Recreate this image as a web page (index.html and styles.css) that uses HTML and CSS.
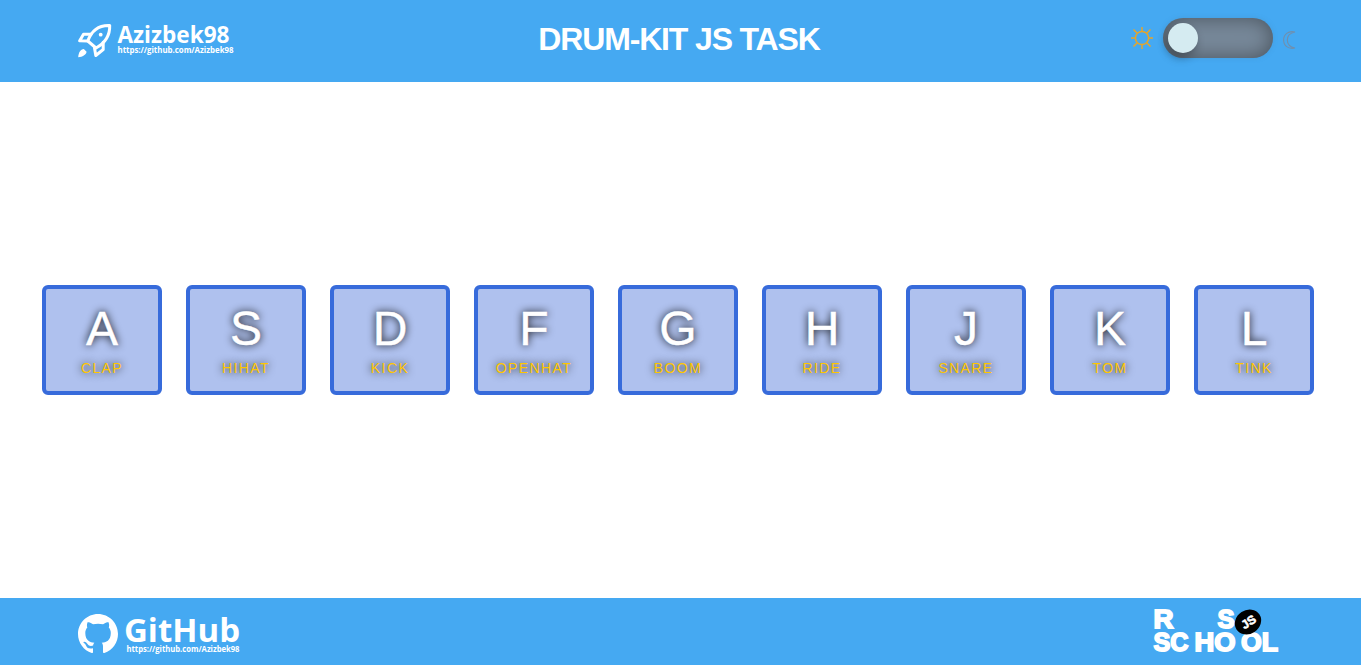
FILE: index.html
```html
<!DOCTYPE html>
<html lang="en">
<head>
<meta charset="utf-8">
<title>Drum-kit JS task</title>
<link rel="stylesheet" href="styles.css">
</head>
<body>
<header class="header">
  <a class="brand"><svg width="170" height="44" viewBox="0 0 170 44">
    <g fill="none" stroke="#fff" stroke-width="3" stroke-linejoin="round" stroke-linecap="round">
      <path d="M9.800 23C13 14 20 7 31.700 7.500C32 17 27 25 18 30Z"/>
      <path d="M13 16.300H5.500L1.700 22.800L9.800 23"/>
      <path d="M25.200 24.300V31.500L17.800 37.500L16.500 30"/>
    </g>
    <path fill="#fff" d="M.2 39.200C.5 34.500 2.500 31.300 5.800 31L8.600 33.800C8 37 4.500 39 .2 39.200Z"/>
    <circle cx="22.700" cy="16.700" r="1.900" fill="#fff"/>
    <text class="logo-text" x="39.500" y="25" font-size="23" textLength="112" lengthAdjust="spacingAndGlyphs">Azizbek98</text>
    <text class="logo-text" x="39.500" y="35" font-size="8" textLength="116" lengthAdjust="spacingAndGlyphs">https://github.com/Azizbek98</text>
  </svg></a>
  <h1 class="title">DRUM-KIT JS TASK</h1>
  <div class="theme">
    <svg class="sun" width="22" height="22" viewBox="0 0 22 22" fill="none" stroke="#e5a52b" stroke-width="1.500">
      <circle cx="11" cy="11" r="6.600"/>
      <path d="M11 0V4M11 18V22M0 11H4M18 11H22M2.500 2.500L6 6M16 16L19.500 19.500M2.500 19.500L6 16M16 6L19.500 2.500"/>
    </svg>
    <button class="switch"><span class="knob"></span></button>
    <svg class="moon" width="13" height="18" viewBox="0 0 13 18" fill="none" stroke="#708fad" stroke-width="1.100">
      <path d="M12 1C5-.5.6 3.500.6 9S5 18.500 12 17C7 16 4.300 13 4.300 9S7 2 12 1Z"/>
    </svg>
  </div>
</header>
<main class="keys">
  <div class="key"><kbd class="letter">A</kbd><span class="sound">CLAP</span></div>
  <div class="key"><kbd class="letter">S</kbd><span class="sound">HIHAT</span></div>
  <div class="key"><kbd class="letter">D</kbd><span class="sound">KICK</span></div>
  <div class="key"><kbd class="letter">F</kbd><span class="sound">OPENHAT</span></div>
  <div class="key"><kbd class="letter">G</kbd><span class="sound">BOOM</span></div>
  <div class="key"><kbd class="letter">H</kbd><span class="sound">RIDE</span></div>
  <div class="key"><kbd class="letter">J</kbd><span class="sound">SNARE</span></div>
  <div class="key"><kbd class="letter">K</kbd><span class="sound">TOM</span></div>
  <div class="key"><kbd class="letter">L</kbd><span class="sound">TINK</span></div>
</main>
<footer class="footer">
  <a class="brand"><svg width="170" height="48" viewBox="0 0 170 48">
    <path fill="#fff" transform="translate(0 6) scale(2.500)" d="M8 0C3.580 0 0 3.580 0 8c0 3.540 2.290 6.530 5.470 7.590.4.070.55-.17.55-.38 0-.19-.01-.82-.01-1.490-2.010.37-2.530-.49-2.690-.94-.09-.23-.48-.94-.82-1.130-.28-.15-.68-.52-.01-.53.63-.01 1.080.58 1.230.82.72 1.210 1.870.87 2.330.66.070-.52.280-.87.510-1.070-1.780-.2-3.640-.89-3.640-3.950 0-.87.310-1.590.82-2.150-.08-.2-.36-1.020.08-2.120 0 0 .67-.21 2.200.82.640-.18 1.320-.27 2-.27s1.360.09 2 .27c1.530-1.040 2.200-.82 2.200-.82.440 1.100.160 1.920.080 2.120.510.560.820 1.270.820 2.150 0 3.070-1.870 3.750-3.650 3.950.290.250.540.730.540 1.480 0 1.070-.01 1.930-.01 2.200 0 .21.150.46.550.38A8.010 8.010 0 0 0 16 8c0-4.420-3.580-8-8-8Z"/>
    <text class="logo-text" x="46" y="34" font-size="32" textLength="116" lengthAdjust="spacingAndGlyphs">GitHub</text>
    <text class="logo-text" x="48.500" y="44" font-size="8" textLength="113" lengthAdjust="spacingAndGlyphs">https://github.com/Azizbek98</text>
  </svg></a>
  <a class="school"><svg class="school-logo" width="126" height="48" viewBox="0 0 126 48">
    <g class="school-text" font-size="26">
      <text x="0.500" y="20" textLength="20" lengthAdjust="spacingAndGlyphs">R</text>
      <text x="64.500" y="20" textLength="17" lengthAdjust="spacingAndGlyphs">S</text>
      <text x="0.500" y="43" textLength="35" lengthAdjust="spacingAndGlyphs">SC</text>
      <text x="41.500" y="43" textLength="41" lengthAdjust="spacingAndGlyphs">HO</text>
      <text x="88" y="43" textLength="37" lengthAdjust="spacingAndGlyphs">OL</text>
    </g>
    <ellipse cx="95" cy="14" rx="13.700" ry="11.800" transform="rotate(-33 95 14)"/>
    <text class="school-js" x="88" y="18.300" font-size="12" transform="rotate(-33 95 14)" textLength="15" lengthAdjust="spacingAndGlyphs">JS</text>
  </svg></a>
</footer>
</body>
</html>
```
FILE: styles.css
```css
* { box-sizing: border-box; }
body {
  margin: 0;
  height: 100vh;
  display: flex;
  flex-direction: column;
  background: #fff;
  font-family: "Liberation Sans", Arial, sans-serif;
  overflow: hidden;
}
.header {
  height: 82px;
  flex: none;
  display: grid;
  grid-template-columns: 1fr auto 1fr;
  align-items: start;
  padding: 18px 65px 0 78px;
  background: #45a9f2;
}
.brand, .school { display: block; line-height: 0; }
.logo-text { fill: #fff; font-family: "Open Sans", sans-serif; font-weight: 700; }
.title {
  margin: 3px 0 0;
  padding-right: 16px;
  color: #fff;
  font-size: 32px;
  line-height: 37px;
  letter-spacing: -1.15px;
}
.theme {
  display: flex;
  justify-content: flex-end;
  align-items: center;
}
.sun { margin-right: 10px; }
.switch {
  width: 110px;
  height: 40px;
  padding: 5px;
  border: 0;
  border-radius: 20px;
  background: #778899;
  box-shadow: inset 0 0 20px rgba(0, 0, 0, 0.4), 0 0 5px rgba(70, 120, 160, 0.25);
}
.knob {
  display: block;
  width: 30px;
  height: 30px;
  border-radius: 50%;
  background: #d5ebf1;
  box-shadow: -2px 5px 10px rgba(0, 0, 0, 0.3);
}
.moon { margin: 3px 0 0 10px; }
.keys {
  flex: 1;
  display: flex;
  justify-content: center;
  align-items: center;
  gap: 24px;
  padding-right: 5px;
}
.key {
  width: 120px;
  height: 110px;
  padding-top: 12px;
  border: 4px solid #376bdb;
  border-radius: 6px;
  background: #afc1ee;
  text-align: center;
}
.letter {
  display: block;
  font: 48px/55px "Liberation Sans", Arial, sans-serif;
  color: #fff;
  -webkit-text-stroke: 0.4px #fff;
  text-shadow: 0 0 8px #000;
}
.sound {
  display: block;
  margin-top: 4px;
  font-size: 14px;
  line-height: 16px;
  letter-spacing: 1.4px;
  color: #ffc600;
  text-shadow: 0 0 8px #000;
}
.footer {
  height: 67px;
  flex: none;
  display: flex;
  justify-content: space-between;
  padding: 10px 82px 0 78px;
  background: #45a9f2;
}
.school-logo { overflow: visible; }
.school-text, .school-js { fill: #fff; font-family: "Liberation Sans", Arial, sans-serif; font-weight: 700; }
.school-text { stroke: #fff; stroke-width: 1.8px; }
.school-js { stroke: #fff; stroke-width: 0.5px; }
```
